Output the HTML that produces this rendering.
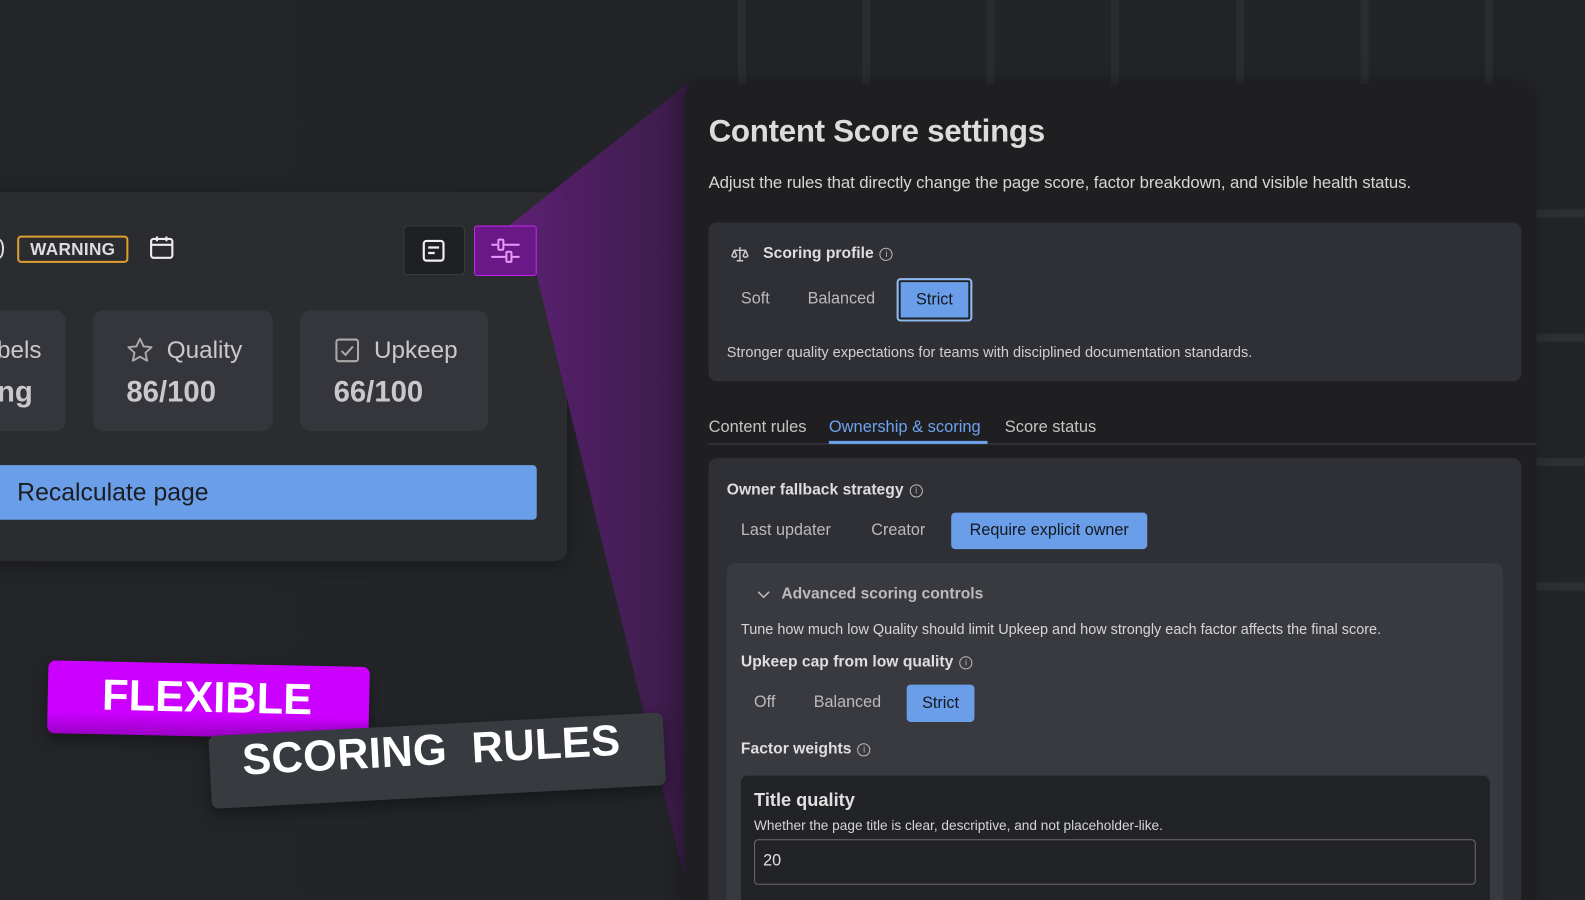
<!DOCTYPE html>
<html><head><meta charset="utf-8"><style>
*{box-sizing:border-box;margin:0;padding:0}
html,body{width:1585px;height:900px;overflow:hidden;background:#222428;font-family:"Liberation Sans",sans-serif}
#w{position:absolute;left:0;top:0;width:1568px;height:890px;transform:scale(1.0108,1.0112);transform-origin:0 0;background:#222428;overflow:hidden}
.a{position:absolute}
.vl{position:absolute;top:0;width:8px;height:900px;background:#2a2c30}
.hl{position:absolute;left:1520px;width:60px;height:8px;background:#2d2f33}
.t{color:#c9c9cc}
.btn{position:absolute;border-radius:4px;font-size:16px;display:flex;align-items:center;justify-content:center}
.sel{background:#6b9ee8;color:#141820}
.info{display:inline-block;width:13px;height:13px;border:1.3px solid #bbb;border-radius:50%;font-size:9px;line-height:11px;text-align:center;color:#bbb;vertical-align:1px;margin-left:6px;font-weight:400}
</style></head><body><div id="w">
<div class="vl" style="left:730px"></div>
<div class="vl" style="left:853px"></div>
<div class="vl" style="left:976px"></div>
<div class="vl" style="left:1099px"></div>
<div class="vl" style="left:1223px"></div>
<div class="vl" style="left:1346px"></div>
<div class="vl" style="left:1469px"></div>
<div class="hl" style="top:207px"></div>
<div class="hl" style="top:330px"></div>
<div class="hl" style="top:453px"></div>
<div class="hl" style="top:576px"></div>
<div class="a" style="left:0;top:0;width:680px;height:890px;background:linear-gradient(90deg,#232528,#222428)"></div>

<div class="a" style="left:-20px;top:190px;width:581px;height:365px;background:#2b2c30;border-radius:12px;box-shadow:0 4px 20px rgba(0,0,0,.3)"></div>
<div class="a" style="left:-6px;top:236px;width:10px;height:20px;border:2px solid #ddd;border-radius:50%;border-left:none"></div>
<div class="a" style="left:17px;top:233px;width:110px;height:27px;border:2px solid #e0a030;border-radius:4px;color:#ddd;font-weight:700;font-size:17px;display:flex;align-items:center;justify-content:center;letter-spacing:.3px">WARNING</div>
<svg class="a" style="left:146px;top:231px" width="28" height="28" viewBox="0 0 24 24" fill="none" stroke="#eee" stroke-width="1.8"><rect x="3" y="4.5" width="18" height="16" rx="2"/><path d="M3 9.5h18M8 2.5v4M16 2.5v4"/></svg>
<div class="a" style="left:399px;top:223px;width:61px;height:49px;background:#1f2023;border:1px solid #393a3e;border-radius:4px"></div>
<svg class="a" style="left:416px;top:235px" width="26" height="26" viewBox="0 0 24 24" fill="none" stroke="#f0f0f0" stroke-width="2"><rect x="3" y="3" width="18" height="18" rx="2.5"/><path d="M7 9h10M7 14h6"/></svg>
<svg class="a" style="left:0;top:0" width="1568" height="890"><defs><linearGradient id="g" x1="0" x2="1" y1="0" y2="0"><stop offset="0" stop-color="#6a1f86" stop-opacity=".9"/><stop offset="1" stop-color="#3c1c4a" stop-opacity=".9"/></linearGradient></defs><polygon points="500,226 680,83 680,880 531,272 470,272" fill="url(#g)"/></svg>
<div class="a" style="left:469px;top:223px;width:62px;height:50px;background:#6a1788;border:1.5px solid #c428ef;border-radius:3px"></div>
<svg class="a" style="left:484px;top:233px" width="32" height="30" viewBox="0 0 32 30" fill="none" stroke="#e79af7" stroke-width="2"><path d="M2 9h6M15 9h15M2 21h14M23 21h7"/><rect x="9" y="4" width="5" height="10" rx="1"/><rect x="17" y="16" width="5" height="10" rx="1"/></svg>

<div class="a" style="left:-30px;top:307px;width:95px;height:119px;background:#35363b;border-radius:10px"></div>
<div class="a t" style="left:-3px;top:333px;font-size:24px">bels</div>
<div class="a t" style="left:-3px;top:372px;font-size:29px;font-weight:700">ng</div>
<div class="a" style="left:92px;top:307px;width:178px;height:119px;background:#35363b;border-radius:10px"></div>
<svg class="a" style="left:124px;top:332px" width="29" height="29" viewBox="0 0 24 24" fill="none" stroke="#aaa" stroke-width="1.6" stroke-linejoin="round"><path d="M12 2.5l2.9 6.2 6.6.7-5 4.5 1.4 6.6L12 17.2l-5.9 3.3 1.4-6.6-5-4.5 6.6-.7z"/></svg>
<div class="a t" style="left:165px;top:333px;font-size:24px">Quality</div>
<div class="a t" style="left:125px;top:372px;font-size:29px;font-weight:700">86/100</div>
<div class="a" style="left:297px;top:307px;width:186px;height:119px;background:#35363b;border-radius:10px"></div>
<svg class="a" style="left:330px;top:333px" width="27" height="27" viewBox="0 0 24 24" fill="none" stroke="#aaa" stroke-width="1.8"><rect x="2.5" y="2.5" width="19" height="19" rx="2"/><path d="M7 12.5l3.5 3.5L17 8.5"/></svg>
<div class="a t" style="left:370px;top:333px;font-size:24px">Upkeep</div>
<div class="a t" style="left:330px;top:372px;font-size:29px;font-weight:700">66/100</div>
<div class="a" style="left:-10px;top:460px;width:541px;height:54px;background:#6b9ee8;border-radius:4px;color:#1b1d22;font-size:24.5px;padding:14px 0 0 27px">Recalculate page</div>

<div class="a" style="left:48px;top:653px;width:318px;height:72px;background:linear-gradient(180deg,#cc00ff 70%,#9c00c8);border-radius:7px;transform:rotate(1.2deg);transform-origin:0 0;box-shadow:0 6px 14px rgba(0,0,0,.35)"></div>
<div class="a" style="left:101px;top:666px;font-size:43px;font-weight:700;color:#fff;transform:rotate(1.3deg)">FLEXIBLE</div>
<div class="a" style="left:206px;top:728px;width:450px;height:72px;background:#373a3e;border-radius:7px;transform:rotate(-3deg);transform-origin:0 0;box-shadow:0 6px 16px rgba(0,0,0,.4)"></div>
<div class="a" style="left:241px;top:728px;font-size:43px;font-weight:700;color:#fff;transform:rotate(-3deg);transform-origin:0 100%;letter-spacing:.3px">SCORING&nbsp; RULES</div>

<div class="a" style="left:677px;top:83px;width:843px;height:820px;background:#1f1f21;border-radius:14px;box-shadow:-4px 0 20px rgba(0,0,0,.3)"></div>
<div class="a" style="left:701px;top:112px;font-size:31px;font-weight:700;color:#dcdcdc;letter-spacing:-.3px">Content Score settings</div>
<div class="a" style="left:701px;top:171px;font-size:16.6px;color:#d6d6d6;letter-spacing:-.1px">Adjust the rules that directly change the page score, factor breakdown, and visible health status.</div>
<div class="a" style="left:701px;top:220px;width:804px;height:157px;background:#2f3035;border-radius:8px"></div>
<svg class="a" style="left:722px;top:242px" width="20" height="19" viewBox="0 0 24 24" fill="none" stroke="#ccc" stroke-width="1.8" stroke-linejoin="round"><path d="M12 3v17M5 7h14M5 7l-3 7a3.5 3.5 0 0 0 6 0zM19 7l-3 7a3.5 3.5 0 0 0 6 0zM8 20h8"/></svg>
<div class="a" style="left:755px;top:242px;font-size:15.5px;font-weight:700;color:#dedede">Scoring profile<span class="info">i</span></div>
<div class="a" style="left:733px;top:287px;font-size:16px;color:#bbb">Soft</div>
<div class="a" style="left:799px;top:287px;font-size:16px;color:#bbb">Balanced</div>
<div class="btn sel" style="left:887px;top:275px;width:75px;height:43px;border:2px solid #8fb8f0;box-shadow:inset 0 0 0 2px #1f1f21">Strict</div>
<div class="a" style="left:719px;top:341px;font-size:14.4px;color:#d0d0d0">Stronger quality expectations for teams with disciplined documentation standards.</div>
<div class="a" style="left:701px;top:438px;width:819px;height:2px;background:#2f3035"></div>
<div class="a" style="left:701px;top:413px;font-size:16.3px;color:#c4c4c4">Content rules</div>
<div class="a" style="left:820px;top:413px;font-size:16.3px;color:#6ea2ee">Ownership &amp; scoring</div>
<div class="a" style="left:820px;top:436px;width:157px;height:3px;background:#6ea2ee"></div>
<div class="a" style="left:994px;top:413px;font-size:16.3px;color:#c4c4c4">Score status</div>

<div class="a" style="left:701px;top:453px;width:804px;height:460px;background:#2f3035;border-radius:8px"></div>
<div class="a" style="left:719px;top:476px;font-size:15.5px;font-weight:700;color:#dedede">Owner fallback strategy<span class="info">i</span></div>
<div class="a" style="left:733px;top:516px;font-size:16px;color:#bbb">Last updater</div>
<div class="a" style="left:862px;top:516px;font-size:16px;color:#bbb">Creator</div>
<div class="btn sel" style="left:941px;top:507px;width:194px;height:36px">Require explicit owner</div>
<div class="a" style="left:719px;top:557px;width:768px;height:360px;background:#393a40;border-radius:8px"></div>
<svg class="a" style="left:749px;top:583px" width="13" height="10" viewBox="0 0 12 8" fill="none" stroke="#bbb" stroke-width="1.4"><path d="M1 1.5l5 5 5-5"/></svg>
<div class="a" style="left:773px;top:579px;font-size:15.5px;font-weight:700;color:#bbb">Advanced scoring controls</div>
<div class="a" style="left:733px;top:615px;font-size:14.3px;color:#d6d6d6">Tune how much low Quality should limit Upkeep and how strongly each factor affects the final score.</div>
<div class="a" style="left:733px;top:646px;font-size:15.5px;font-weight:700;color:#dedede">Upkeep cap from low quality<span class="info">i</span></div>
<div class="a" style="left:746px;top:686px;font-size:16px;color:#bbb">Off</div>
<div class="a" style="left:805px;top:686px;font-size:16px;color:#bbb">Balanced</div>
<div class="btn sel" style="left:897px;top:677px;width:67px;height:37px">Strict</div>
<div class="a" style="left:733px;top:732px;font-size:15.5px;font-weight:700;color:#dedede">Factor weights<span class="info">i</span></div>
<div class="a" style="left:733px;top:767px;width:741px;height:130px;background:#222326;border-radius:7px"></div>
<div class="a" style="left:746px;top:781px;font-size:18px;font-weight:700;color:#e0e0e0">Title quality</div>
<div class="a" style="left:746px;top:809px;font-size:13.5px;color:#d6d6d6">Whether the page title is clear, descriptive, and not placeholder-like.</div>
<div class="a" style="left:746px;top:830px;width:714px;height:45px;border:1.5px solid #6a6b70;border-radius:4px;background:#222326;color:#e0e0e0;font-size:16px;padding:12px 0 0 8px">20</div>
</div></body></html>
